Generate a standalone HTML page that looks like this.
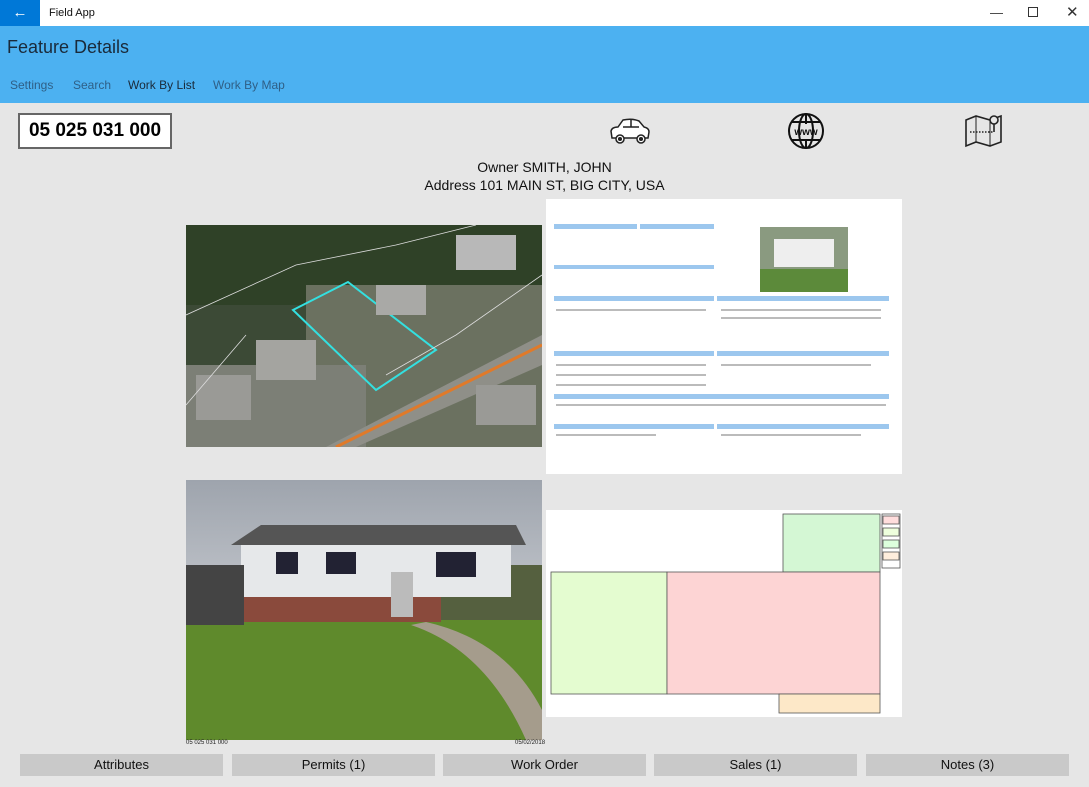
<!DOCTYPE html>
<html><head><meta charset="utf-8"><style>
*{margin:0;padding:0;box-sizing:border-box}
body{width:1089px;height:787px;overflow:hidden;background:#e6e6e6;font-family:"Liberation Sans",sans-serif;position:relative}
.a{position:absolute}
.btn{position:absolute;top:754px;height:22px;width:203px;background:#c9c9c9;font-size:13px;text-align:center;line-height:22px;color:#111}
.nav{font-size:12px;color:#2f5f86;top:78px}
</style></head><body>
<div class="a" style="left:0;top:0;width:1089px;height:26px;background:#fff"></div>
<div class="a" style="left:0;top:0;width:40px;height:26px;background:#0078d7;color:#fff;font-size:15px;text-align:center;line-height:25px">&#8592;</div>
<div class="a" style="left:49px;top:7px;font-size:11px;color:#111">Field App</div>
<div class="a" style="left:990px;top:5px;font-size:13px;color:#333">&#8212;</div>
<div class="a" style="left:1028px;top:7px;width:10px;height:10px;border:1px solid #333"></div>
<div class="a" style="left:1066px;top:3px;font-size:15px;color:#333">&#10005;</div>
<div class="a" style="left:0;top:26px;width:1089px;height:77px;background:#4cb1f1"></div>
<div class="a" style="left:7px;top:37px;font-size:18px;color:#1a2a3a">Feature Details</div>
<div class="a nav" style="left:10px">Settings</div>
<div class="a nav" style="left:73px">Search</div>
<div class="a nav" style="left:128px;color:#1a2a3a">Work By List</div>
<div class="a nav" style="left:213px">Work By Map</div>
<div class="a" style="left:18px;top:113px;width:154px;height:36px;border:2px solid #666;background:#fff;font-size:19px;font-weight:bold;text-align:center;line-height:32px">05 025 031 000</div>
<svg class="a" style="left:608px;top:116px" width="44" height="30" viewBox="0 0 44 30" fill="none" stroke="#222" stroke-width="1.5"><path d="M4 22 L3 15 Q4 11 10 11 L15 4 Q24 2 31 5 L36 11 Q41 12 41 16 L40 22 Z" fill="#fff"/><path d="M15 11 L31 11 M23 4 L23 11"/><circle cx="12" cy="23" r="4" fill="#fff"/><circle cx="33" cy="23" r="4" fill="#fff"/><circle cx="12" cy="23" r="1.3" fill="#222"/><circle cx="33" cy="23" r="1.3" fill="#222"/></svg>
<svg class="a" style="left:787px;top:112px" width="38" height="38" viewBox="0 0 38 38" fill="none" stroke="#111" stroke-width="2"><circle cx="19" cy="19" r="17"/><ellipse cx="19" cy="19" rx="7" ry="17"/><path d="M19 2V12M19 27V36M5 10H33M5 28H33"/><text x="19" y="23" font-size="10" font-weight="bold" fill="#111" stroke="none" text-anchor="middle" font-family="Liberation Sans">www</text></svg>
<svg class="a" style="left:964px;top:112px" width="40" height="36" viewBox="0 0 40 36" fill="none" stroke="#222" stroke-width="1.6"><path d="M2 8 L12 4 L26 8 L37 4 L37 30 L26 34 L12 30 L2 34 Z"/><path d="M12 4V30M26 8V34" stroke-width="1"/><path d="M6 20H30" stroke-dasharray="1.5 1.5"/><circle cx="30" cy="8" r="4" fill="#e6e6e6"/><path d="M30 12V20"/></svg>
<div class="a" style="left:0;width:1089px;top:159px;text-align:center;font-size:14px;color:#111">Owner SMITH, JOHN</div>
<div class="a" style="left:0;width:1089px;top:177px;text-align:center;font-size:14px;color:#111">Address 101 MAIN ST, BIG CITY, USA</div>
<svg class="a" style="left:186px;top:225px" width="356" height="222" viewBox="0 0 356 222">
<rect width="356" height="222" fill="#3c4a36"/>
<rect x="0" y="0" width="356" height="80" fill="#2f4127"/>
<rect x="120" y="60" width="236" height="162" fill="#6b7160"/>
<rect x="0" y="140" width="180" height="82" fill="#7c7f76"/>
<path d="M140 222 L356 110 L356 140 L170 222 Z" fill="#8f8f88"/>
<path d="M150 222 L356 120" stroke="#e07a2a" stroke-width="3"/>
<path d="M107 85 L162 57 L250 125 L190 165 Z" fill="none" stroke="#33e0e0" stroke-width="2"/>
<rect x="270" y="10" width="60" height="35" fill="#b8b8b8"/><rect x="190" y="60" width="50" height="30" fill="#a9a9a6"/><rect x="70" y="115" width="60" height="40" fill="#a4a4a0"/><rect x="10" y="150" width="55" height="45" fill="#9a9a96"/><rect x="290" y="160" width="60" height="40" fill="#9a9a96"/>
<path d="M0 90 L110 40 L210 20 L290 0 M0 180 L60 110 M200 150 L270 110 L356 50" stroke="#ddd" stroke-width="0.8" fill="none"/>
</svg>
<div class="a" style="left:546px;top:199px;width:356px;height:275px;background:#fff"></div>
<svg class="a" style="left:546px;top:199px" width="356" height="275" viewBox="0 0 356 275">
<g fill="#9cc7ee"><rect x="8" y="25" width="83" height="5"/><rect x="94" y="25" width="74" height="5"/><rect x="8" y="66" width="160" height="4"/><rect x="8" y="97" width="160" height="5"/><rect x="171" y="97" width="172" height="5"/><rect x="8" y="152" width="160" height="5"/><rect x="171" y="152" width="172" height="5"/><rect x="8" y="195" width="335" height="5"/><rect x="8" y="225" width="160" height="5"/><rect x="171" y="225" width="172" height="5"/></g>
<rect x="214" y="28" width="88" height="65" fill="#8a9a80"/><rect x="214" y="70" width="88" height="23" fill="#5c8a3a"/><rect x="228" y="40" width="60" height="28" fill="#eee"/>
<g fill="#bbb"><rect x="10" y="110" width="150" height="2"/><rect x="175" y="110" width="160" height="2"/><rect x="175" y="118" width="160" height="2"/><rect x="10" y="165" width="150" height="2"/><rect x="10" y="175" width="150" height="2"/><rect x="10" y="185" width="150" height="2"/><rect x="175" y="165" width="150" height="2"/><rect x="10" y="205" width="330" height="2"/><rect x="10" y="235" width="100" height="2"/><rect x="175" y="235" width="140" height="2"/></g>
</svg>
<svg class="a" style="left:186px;top:480px" width="356" height="260" viewBox="0 0 356 260">
<defs><linearGradient id="s" x1="0" y1="0" x2="0" y2="1"><stop offset="0" stop-color="#9ea4ad"/><stop offset="1" stop-color="#e8e9ec"/></linearGradient></defs>
<rect width="356" height="260" fill="url(#s)"/>
<rect x="0" y="85" width="356" height="60" fill="#55603f"/>
<rect x="0" y="140" width="356" height="120" fill="#5f8a2c"/>
<path d="M45 65 L75 45 L330 45 L340 65 Z" fill="#555"/>
<rect x="55" y="65" width="270" height="52" fill="#e6e8ea"/>
<rect x="55" y="117" width="200" height="25" fill="#8a4a3c"/>
<rect x="0" y="85" width="58" height="60" fill="#444"/>
<g fill="#223"><rect x="90" y="72" width="22" height="22"/><rect x="140" y="72" width="30" height="22"/><rect x="250" y="72" width="40" height="25"/></g>
<rect x="205" y="92" width="22" height="45" fill="#bbb"/>
<path d="M225 145 Q300 170 340 260 L356 260 L356 230 Q320 160 240 142 Z" fill="#a59c8c"/>
</svg>
<div class="a" style="left:186px;top:740px;font-size:6px;color:#222">05 025 031 000</div>
<div class="a" style="left:515px;top:740px;font-size:6px;color:#222">05/02/2018</div>
<div class="a" style="left:546px;top:510px;width:356px;height:207px;background:#fff"></div>
<svg class="a" style="left:546px;top:510px" width="356" height="207" viewBox="0 0 356 207" stroke="#555" stroke-width="0.8">
<rect x="237" y="4" width="97" height="58" fill="#d4f7d4"/>
<rect x="5" y="62" width="116" height="122" fill="#e4fcd0"/>
<rect x="121" y="62" width="213" height="122" fill="#fdd4d4"/>
<rect x="233" y="184" width="101" height="19" fill="#fde8c8"/>
<rect x="336" y="4" width="18" height="54" fill="#fff"/>
<rect x="337" y="6" width="16" height="8" fill="#fdd"/><rect x="337" y="18" width="16" height="8" fill="#efd"/><rect x="337" y="30" width="16" height="8" fill="#dfd"/><rect x="337" y="42" width="16" height="8" fill="#fed"/>
</svg>
<div class="btn" style="left:20px">Attributes</div>
<div class="btn" style="left:232px">Permits (1)</div>
<div class="btn" style="left:443px">Work Order</div>
<div class="btn" style="left:654px">Sales (1)</div>
<div class="btn" style="left:866px">Notes (3)</div>
</body></html>
